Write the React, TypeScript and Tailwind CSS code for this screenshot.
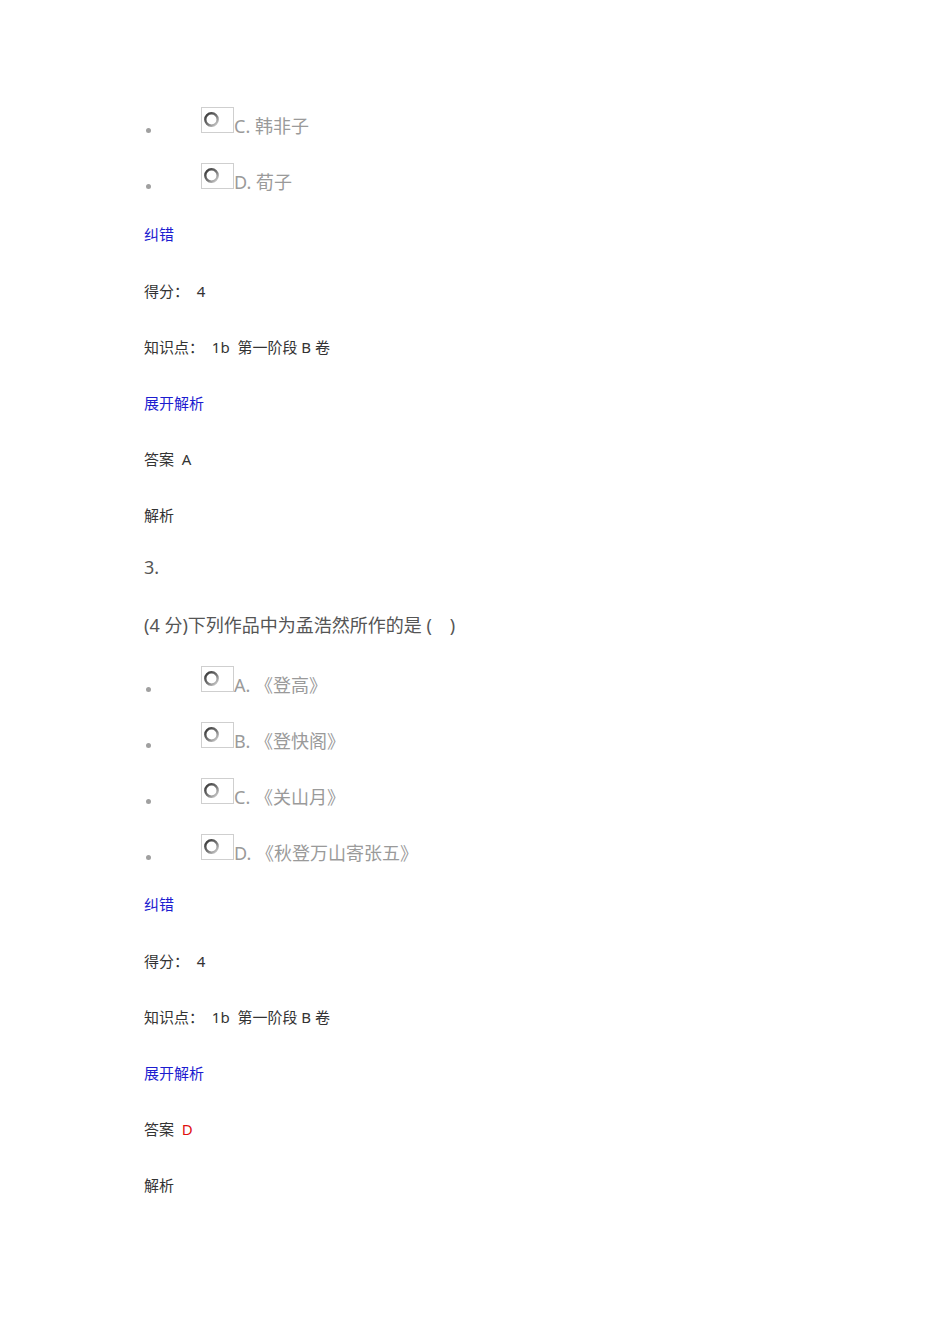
import React from 'react';

const font = { fontFamily: '"Noto Sans", "Noto Sans CJK SC", sans-serif' };

function RadioIcon() {
  return (
    <svg width="17" height="17" viewBox="0 0 17 17" className="absolute left-[1px] top-[3px]">
      <defs>
        <linearGradient id="rg" x1="0" y1="0" x2="1" y2="1">
          <stop offset="0" stopColor="#333" />
          <stop offset="0.55" stopColor="#777" />
          <stop offset="1" stopColor="#d8d8d8" />
        </linearGradient>
      </defs>
      <circle cx="8.5" cy="8.5" r="6.2" fill="#fff" stroke="url(#rg)" strokeWidth="2.4" />
    </svg>
  );
}

function Option({ label, text, mt = 0 }: { label: string; text: string; mt?: number }) {
  return (
    <div
      className="h-14 leading-[56px] text-[18px] text-[#9a9a9a] whitespace-pre"
      style={{ marginTop: mt }}
    >
      <span className="inline-block w-[5px] h-[5px] ml-[2px] rounded-full bg-[#a0a0a0]" />
      <span className="inline-block relative w-[33px] h-[26px] ml-[50px] border border-[#cfcfcf] bg-white">
        <RadioIcon />
      </span>
      {label}. {text}
    </div>
  );
}

function Line({ children, mt = 0, size = 'text-[15px]' }: { children: React.ReactNode; mt?: number; size?: string }) {
  return (
    <div className={`h-14 leading-[56px] ${size} text-[#333] whitespace-pre`} style={{ marginTop: mt }}>
      {children}
    </div>
  );
}

function Footer({ answer, red, first }: { answer: string; red?: boolean; first: number }) {
  return (
    <>
      <Line mt={first}>
        <span className="text-[#1c1cd0]">纠错</span>
      </Line>
      <Line mt={1}>得分：  4</Line>
      <Line>知识点：  1b  第一阶段 B 卷</Line>
      <Line>
        <span className="text-[#1c1cd0]">展开解析</span>
      </Line>
      <Line>
        答案  <span className={red ? 'text-[#e01010]' : ''}>{answer}</span>
      </Line>
      <Line>解析</Line>
    </>
  );
}

export default function App() {
  return (
    <div className="w-[950px] min-h-[1344px] bg-white pt-[98px] pl-[144px]" style={font}>
      <Option label="C" text="韩非子" />
      <Option label="D" text="荀子" />
      <Footer answer="A" first={-4} />

      <Line mt={-4} size="text-[18px] text-[#555]">3.</Line>
      <Line mt={2} size="text-[18px] text-[#555]">(4 分)下列作品中为孟浩然所作的是 (　)</Line>

      <Option label="A" text="《登高》" mt={4} />
      <Option label="B" text="《登快阁》" />
      <Option label="C" text="《关山月》" />
      <Option label="D" text="《秋登万山寄张五》" />
      <Footer answer="D" red first={-5} />
    </div>
  );
}
